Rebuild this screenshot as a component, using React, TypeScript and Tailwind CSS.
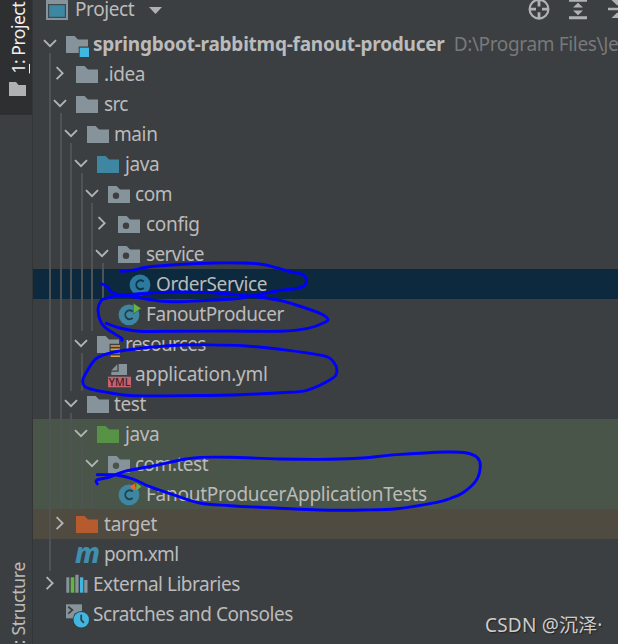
import React from "react";

type Pt = [number, number];

// Catmull-Rom smoothing of the pen points
function smooth(p: Pt[]): string {
  let d = `M${p[0][0]} ${p[0][1]}`;
  for (let i = 0; i < p.length - 1; i++) {
    const a = p[Math.max(0, i - 1)];
    const b = p[i];
    const c = p[i + 1];
    const e = p[Math.min(p.length - 1, i + 2)];
    d += `C${b[0] + (c[0] - a[0]) / 6} ${b[1] + (c[1] - a[1]) / 6} ${c[0] - (e[0] - b[0]) / 6} ${c[1] - (e[1] - b[1]) / 6} ${c[0]} ${c[1]}`;
  }
  return d;
}

const STROKES: Pt[][] = [
  [[121, 271.3], [133, 270.3], [148, 267], [183, 264.3], [215, 263], [240, 263], [260, 264], [276.7, 267.7], [290, 271.7], [301.7, 274], [306, 278.5], [305.3, 284.5], [299, 288], [276.7, 291], [253, 295.7], [233, 299], [200, 300.7], [179.7, 301.7], [159.7, 301], [136, 297.3], [120, 295], [111, 291.7], [107, 286.7], [101.5, 283.7]],
  [[121.7, 340.3], [121, 337.7], [108, 329.7], [101, 322.3], [98, 310], [100.5, 301.7], [106, 298.3], [133, 294.3], [173, 292], [210, 292.5], [250, 296], [276.7, 299.7], [293, 304], [320, 313.3], [327.7, 318.6], [325, 322.2], [308, 328.3], [280, 331.3], [233, 331], [166, 331.3], [139.7, 331.3], [119.7, 328], [106.3, 323.3]],
  [[200, 344.7], [243, 345.7], [280, 349.3], [323, 355.7], [334, 362.7], [336.7, 372.3], [331, 379.3], [306.7, 390.3], [280, 392.7], [233, 395], [200, 395.5], [133, 395.7], [109.7, 392.7], [93, 389.7], [85, 386.7], [82.7, 381], [86, 373], [96.3, 358.5], [113, 352.3], [149.7, 347.3], [176, 345.2], [200, 344.7]],
  [[97.3, 484], [97, 480], [109.7, 477], [124.7, 471.3], [153, 466], [183, 459.5], [200, 457.4], [230, 457.3], [280, 459], [330, 459.3], [363, 458], [396.7, 454.6], [446.7, 452], [466.7, 453], [477.3, 457.6], [480.3, 466], [476.5, 480], [463.3, 492.5], [450, 498.5], [436.7, 502.3], [396.7, 508.7], [363, 510], [320, 510], [280, 508.3], [230, 505.7], [199.7, 503], [173, 494.7], [149.7, 486.7], [133, 479], [116.3, 475], [97.3, 474.7]],
];

// x, top, bottom of each indent guide
const GUIDES: [number, number, number][] = [
  [49, 53, 571], [60, 113, 509], [70, 143, 391], [81, 173, 331], [91, 203, 331], [102, 263, 299],
  [81, 353, 391], [70, 413, 509], [81, 443, 509], [91, 473, 509],
];

const FOLDER = "M0 7h8.6l3.4 3.6h10V24H0z";

const Ic = ({ children }: { children: React.ReactNode }) => (
  <svg className="h-[30px] w-[22px] shrink-0 overflow-visible" viewBox="0 0 22 30">{children}</svg>
);
const Folder = ({ color = "#87939a" }: { color?: string }) => <Ic><path d={FOLDER} fill={color} /></Ic>;
const Module = () => (
  <Ic>
    <path d="M0 7h8.6l3.4 3.6h10v6.9h-9.3V24H0z" fill="#87939a" />
    <path d="M13.7 18.7h9.3v9.3h-9.3z" fill="#40b6e0" />
  </Ic>
);
const Pack = ({ hole = "#3c3f41" }: { hole?: string }) => (
  <Ic><path d={FOLDER} fill="#87939a" /><circle cx="8" cy="16.7" r="3.2" fill={hole} /></Ic>
);
const Cls = ({ kind }: { kind: "plain" | "run" | "test" }) => (
  <Ic>
    <circle cx="11" cy="15.8" r="10.4" fill={kind === "plain" ? "#2a7b9f" : "#3e87a2"} />
    <path d="M14.7 12.7A4.3 4.5 0 1 0 14.7 18.9" fill="none" stroke={kind === "plain" ? "#123247" : "#24404d"} strokeWidth="1.9" />
    {kind === "run" && <path d="M15.3 4l8 5.4-8 5.4z" fill="#62b543" stroke="#3c3f41" strokeWidth=".5" />}
    {kind === "test" && <path d="M17.3 4v7.4L12 7.7z" fill="#f26522" />}
    {kind === "test" && <path d="M18.3 4v7.4l5-3.7z" fill="#62b543" />}
  </Ic>
);
const Res = () => (
  <Ic>
    <path d="M0 7h8.6l3.4 3.6h10v4.2h-9.5V24H0z" fill="#87939a" />
    <path d="M13.7 17h9.3M13.7 20.4h9.3M13.7 23.8h9.3M13.7 27.2h9.3" stroke="#d9a343" strokeWidth="1.6" />
  </Ic>
);
const Yml = () => (
  <Ic>
    <path d="M10.6 5H19v11H3.3v-3.2h7.3z" fill="#87939a" />
    <path d="M9.3 5.3v6.2H3.3z" fill="#87939a" />
    <path d="M0 17.7h23v10.6H0z" fill="#c4636f" />
    <text x=".8" y="27" textLength="21.5" lengthAdjust="spacingAndGlyphs" className="font-['Noto_Sans',sans-serif] text-[11.5px] font-medium" fill="#3a2226">YML</text>
  </Ic>
);
const Maven = () => (
  <Ic>
    <text x="-1" y="23.7" textLength="25" lengthAdjust="spacingAndGlyphs" className="font-['Noto_Sans',sans-serif] text-[28px] font-extrabold italic" fill="#3e8fb0">m</text>
  </Ic>
);
const Libs = () => (
  <Ic>
    <path d="M.3 8.3h3v15.4h-3zM9.3 5.7h3.3v18H9.3zM18.2 11h3.3v12.7h-3.3z" fill="#87939a" />
    <path d="M4.7 8.3h3.6v15.4H4.7z" fill="#62b543" />
    <path d="M14 8.3h3.3v15.4H14z" fill="#40b6e0" />
  </Ic>
);
const Scratch = () => (
  <Ic>
    <path d="M0 5.3h16v14H0z" fill="#87939a" />
    <path d="M2.3 7.8l4 3.3-4 3.5M8.5 15.3h5" fill="none" stroke="#3c3f41" strokeWidth="1.8" />
    <circle cx="15.3" cy="20.7" r="8.6" fill="#3c3f41" />
    <circle cx="15.3" cy="20.7" r="7.7" fill="#40b6e0" />
    <path d="M15.2 15.8v5l2.7 3" fill="none" stroke="#2d4450" strokeWidth="1.8" />
  </Ic>
);

const Arrow = ({ open }: { open?: boolean }) => (
  <svg className="h-[30px] w-4 shrink-0" viewBox="0 0 16 30">
    {open !== undefined && (
      <path d={open ? "M2 11.2l6 6 6-6" : "M4.6 8.2l6 6-6 6"} fill="none" stroke="#b1b4b6" strokeWidth="1.9" />
    )}
  </svg>
);

const PADS = ["pl-[9px]", "pl-[19px]", "pl-[30px]", "pl-10", "pl-[51px]", "pl-[61px]", "pl-[72px]"];
const GAPS = ["ml-[5px]", "ml-1.5", "ml-[5px]", "ml-1.5", "ml-[5px]", "ml-1.5", "ml-[5px]"];

type Row = { l: number; open?: boolean; icon: React.ReactNode; t: string; bg?: string; cls?: string; note?: string };
const ROWS: Row[] = [
  { l: 0, open: true, icon: <Module />, t: "springboot-rabbitmq-fanout-producer", cls: "font-bold tracking-[-0.235px]", note: "D:\\Program Files\\Je" },
  { l: 1, open: false, icon: <Folder />, t: ".idea" },
  { l: 1, open: true, icon: <Folder />, t: "src", cls: "tracking-[-0.6px]" },
  { l: 2, open: true, icon: <Folder />, t: "main" },
  { l: 3, open: true, icon: <Folder color="#3e87a2" />, t: "java" },
  { l: 4, open: true, icon: <Pack />, t: "com", cls: "tracking-[-0.4px]" },
  { l: 5, open: false, icon: <Pack />, t: "config", cls: "tracking-[-0.3px]" },
  { l: 5, open: true, icon: <Pack />, t: "service", cls: "tracking-[-0.6px]" },
  { l: 6, icon: <Cls kind="plain" />, t: "OrderService", bg: "bg-[#0d293e]" },
  { l: 5, icon: <Cls kind="run" />, t: "FanoutProducer", cls: "tracking-[-0.43px]" },
  { l: 3, open: true, icon: <Res />, t: "resources", cls: "tracking-[-0.7px]" },
  { l: 4, icon: <Yml />, t: "application.yml", cls: "tracking-[-0.22px]" },
  { l: 2, open: true, icon: <Folder />, t: "test", cls: "tracking-[-0.4px]" },
  { l: 3, open: true, icon: <Folder color="#569344" />, t: "java", bg: "bg-[#495549]" },
  { l: 4, open: true, icon: <Pack hole="#495549" />, t: "com.test", bg: "bg-[#495549]", cls: "tracking-[-0.5px]" },
  { l: 5, icon: <Cls kind="test" />, t: "FanoutProducerApplicationTests", bg: "bg-[#495549]", cls: "tracking-[-0.27px]" },
  { l: 1, open: false, icon: <Folder color="#b55b2d" />, t: "target", bg: "bg-[#4f4b41]", cls: "tracking-[-0.2px]" },
  { l: 1, icon: <Maven />, t: "pom.xml", cls: "tracking-[-0.6px]" },
  { l: 0, open: false, icon: <Libs />, t: "External Libraries", cls: "tracking-[-0.48px]" },
  { l: 0, icon: <Scratch />, t: "Scratches and Consoles", cls: "tracking-[-0.45px]" },
];

export default function App() {
  return (
    <div className="relative flex h-[644px] w-[618px] overflow-hidden bg-[#3c3f41] font-['Noto_Sans','Noto_Sans_CJK_SC',sans-serif] text-[19px] text-[#bbbbbb]">
      <aside className="flex w-[33px] shrink-0 flex-col justify-between border-r border-[#323435]">
        <div className="flex h-[115px] flex-col items-center bg-[#2d2f30]">
          <div className="flex h-[73px] w-full items-end justify-center pl-1">
            <span className="rotate-180 text-[17.5px] leading-[26px] tracking-[-0.5px] whitespace-nowrap text-[#eeeeee] [writing-mode:vertical-rl]">
              <u className="underline-offset-2">1</u>: Project
            </span>
          </div>
          <svg className="mt-[9px] ml-[2px] h-[14px] w-[17px]" viewBox="0 0 17 14">
            <path d="M0 0h7l2.5 3H17v11H0z" fill="#afb1b3" />
          </svg>
        </div>
        <div className="flex h-[90px] items-end justify-center pl-1">
          <span className="rotate-180 text-[17.5px] leading-[26px] tracking-[-0.3px] whitespace-nowrap [writing-mode:vertical-rl]">: Structure</span>
        </div>
      </aside>
      <main className="flex min-w-0 flex-1 flex-col">
        <header className="flex h-[29px] shrink-0 items-start pl-[13px]">
          <svg className="h-5 w-[22px]" viewBox="0 0 22 20">
            <path d="M0 0h22v20H0z" fill="#87939a" />
            <path d="M2 4h18v14H2z" fill="#3c4a50" />
            <path d="M3.2 5.2h15.6v11.6H3.2z" fill="#3e87a2" />
          </svg>
          <span className="ml-[7px] w-[61px] leading-[19px] tracking-[-0.4px] whitespace-nowrap">Project</span>
          <svg className="mt-[7px] ml-[13px] h-[7px] w-[13px]" viewBox="0 0 13 7"><path d="M0 0h13L6.5 7z" fill="#afb1b3" /></svg>
          <svg className="ml-[366px] h-5 w-[22px] shrink-0" viewBox="0 0 22 20">
            <circle cx="11" cy="9.2" r="9.4" fill="none" stroke="#afb1b3" strokeWidth="2.2" />
            <path d="M11 0v6.5M11 12.2v6.5M1.5 9.2H8M14 9.2h6.5" stroke="#afb1b3" strokeWidth="2.8" />
          </svg>
          <svg className="ml-[19px] h-5 w-[18px] shrink-0" viewBox="0 0 18 20">
            <path d="M0 0h18v1.7H0zM0 16.3h18v3H0zM9 2.7l5 4.8H4zM4 10.5h10l-5 4.8z" fill="#afb1b3" />
          </svg>
          <svg className="ml-[21px] h-5 w-[10px] shrink-0" viewBox="0 0 10 20">
            <path d="M0 7.7h10v2.6H0zM3.5 0H10v5.3H9zM3.5 18L9 12.7h1V18z" fill="#afb1b3" />
          </svg>
        </header>
        {ROWS.map((r, i) => (
          <div key={i} className={`flex h-[30px] shrink-0 items-center whitespace-nowrap ${PADS[r.l]} ${r.bg ?? ""}`}>
            <Arrow open={r.open} />
            <span className="w-2 shrink-0" />
            {r.icon}
            <span className={`leading-[30px] ${GAPS[r.l]} ${r.cls ?? "tracking-[-0.4px]"}`}>{r.t}</span>
            {r.note && <span className="ml-[9px] tracking-[-0.35px] text-[#77797a]">{r.note}</span>}
          </div>
        ))}
      </main>
      <svg className="pointer-events-none absolute inset-0 h-[644px] w-[618px]" viewBox="0 0 618 644">
        {GUIDES.map(([x, a, b], i) => <rect key={i} x={x} y={a} width="2" height={b - a} fill="#505355" />)}
        {STROKES.map((s, i) => <path key={i} d={smooth(s)} fill="none" stroke="#0000ff" strokeWidth="2.9" strokeLinecap="round" strokeLinejoin="round" />)}
      </svg>
      <div className="absolute top-[610px] left-[485px] text-[19px] leading-[30px] tracking-[0.2px] whitespace-nowrap text-[#cdcdcd] [text-shadow:1px_1px_1px_#222]">CSDN @沉泽·</div>
    </div>
  );
}
